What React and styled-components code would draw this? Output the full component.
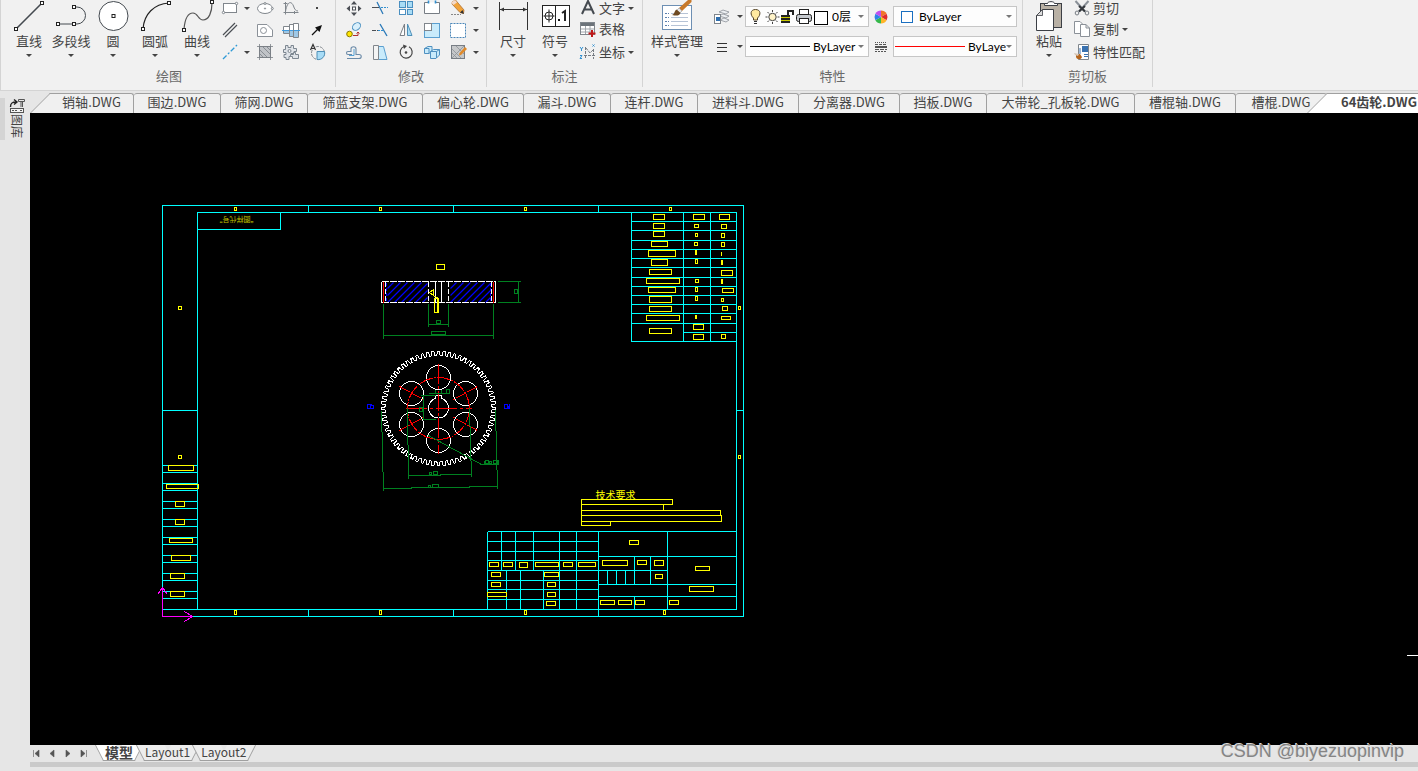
import React from 'react';
import styled, { createGlobalStyle, css } from 'styled-components';

const FONT = '"Noto Sans CJK SC", "Noto Sans", sans-serif';

const COLOR = {
  ribbon: '#f1f1f1',
  chrome: '#e6e6e6',
  line: '#d4d4d4',
  tabLine: '#a0a0a0',
  text: '#444444',
  muted: '#6a6a6a',
  cyan: '#00ffff',
  yellow: '#ffff00',
  green: '#008020',
  magenta: '#ff00ff',
};

/* ---------- drawing data: [x, y, w, h] and [x1, y1, x2, y2] ---------- */

const FRAME_LINES = [
  [162, 609, 197, 609],
  [308, 205, 308, 212], [453, 205, 453, 212], [598, 205, 598, 212],
  [308, 609, 308, 616], [453, 609, 453, 616], [598, 609, 598, 616],
  [162, 410, 197, 410], [736, 410, 743, 410],
  [197, 229, 280, 229], [280, 212, 280, 229],
];

const SIDE_ROWS = [465, 472, 483, 490, 501, 508, 519, 526, 537, 544, 555, 562, 573, 580, 591, 598];

const PARAM_ROWS = [221, 230, 240, 249, 258, 267, 277, 286, 295, 304, 313, 323, 341];

const PARAM_LINES = [
  [631, 212, 631, 341], [683, 212, 683, 341], [710, 212, 710, 341], [683, 332, 736, 332],
];

const TITLE_LINES = [
  [487, 531, 736, 531], [487, 531, 487, 609], [598, 531, 598, 609], [667, 531, 667, 609],
  [487, 541, 598, 541], [487, 551, 598, 551], [487, 560, 598, 560], [487, 570, 667, 570],
  [487, 580, 598, 580], [487, 589, 598, 589], [487, 599, 598, 599],
  [501, 531, 501, 570], [515, 531, 515, 570], [533, 531, 533, 570],
  [559, 531, 559, 609], [576, 531, 576, 609],
  [506, 570, 506, 609], [520, 570, 520, 609], [543, 570, 543, 609],
  [598, 556, 736, 556], [598, 584, 736, 584], [598, 596, 736, 596],
  [634, 556, 634, 584], [634, 596, 634, 609], [650, 556, 650, 584],
  [607, 570, 607, 584], [616, 570, 616, 584], [625, 570, 625, 584],
];

const BOXES = [
  // zone marks
  [234, 207, 2, 3], [379, 207, 2, 3], [524, 207, 2, 3], [669, 207, 2, 3],
  [234, 610, 2, 4], [379, 610, 2, 4], [524, 610, 2, 4], [663, 610, 2, 4],
  [178, 306, 3, 3], [178, 455, 3, 3], [738, 306, 2, 3], [738, 455, 2, 3],
  // left strip
  [168, 465, 25, 5], [166, 484, 32, 4], [175, 501, 9, 5], [175, 519, 9, 5],
  [169, 538, 23, 4], [171, 555, 19, 5], [170, 573, 14, 5], [170, 591, 14, 5],
  // parameter table
  [653, 214, 11, 5], [653, 223, 11, 5], [653, 231, 11, 5], [651, 241, 16, 5],
  [648, 250, 27, 6], [651, 259, 16, 6], [649, 269, 22, 5], [646, 278, 33, 5],
  [648, 287, 27, 5], [649, 296, 22, 6], [649, 306, 22, 5], [646, 315, 33, 5],
  [649, 328, 22, 5],
  [693, 214, 11, 5], [694, 224, 4, 3], [695, 233, 2, 3], [694, 242, 3, 3],
  [695, 250, 1, 4], [695, 259, 2, 4], [695, 279, 3, 3], [695, 287, 2, 4],
  [695, 296, 2, 4], [695, 315, 1, 3], [693, 324, 10, 5], [693, 334, 10, 5],
  [719, 214, 10, 5], [721, 224, 5, 4], [721, 233, 3, 4], [721, 242, 3, 4],
  [721, 260, 1, 4], [721, 270, 11, 5], [721, 279, 1, 4], [722, 288, 11, 4],
  [721, 298, 2, 3], [722, 306, 5, 4], [721, 316, 9, 3], [721, 334, 4, 4],
  // title block
  [489, 562, 9, 4], [503, 562, 9, 4], [519, 562, 8, 5], [535, 562, 23, 4],
  [563, 562, 9, 4], [578, 562, 17, 4], [491, 572, 9, 4], [544, 572, 14, 4],
  [491, 582, 9, 4], [547, 582, 8, 4], [487, 592, 19, 4], [547, 592, 8, 4],
  [546, 601, 9, 4], [629, 540, 9, 4], [602, 560, 25, 5], [637, 560, 9, 4],
  [654, 560, 9, 5], [655, 574, 7, 4], [695, 566, 14, 4], [689, 586, 24, 5],
  [600, 600, 14, 4], [618, 600, 13, 4], [635, 600, 9, 4], [669, 600, 9, 4],
  // notes
  [581, 499, 91, 5], [581, 504, 82, 6], [581, 510, 139, 5], [581, 515, 140, 6],
  [581, 521, 29, 4],
  // section mark
  [436, 264, 8, 5],
];

const linesToPath = (lines) => lines.map(([a, b, c, d]) => `M${a} ${b}L${c} ${d}`).join('');
const boxesToPath = (boxes) => boxes.map(([x, y, w, h]) => `M${x} ${y}h${w}v${h}h${-w}z`).join('');

function gearPath(cx, cy, teeth, root, tip) {
  const pitch = (Math.PI * 2) / teeth;
  const points = [];
  for (let i = 0; i < teeth; i++) {
    [[-0.32, root], [-0.18, tip], [0.18, tip], [0.32, root]].forEach(([offset, r]) => {
      const a = (i + offset) * pitch - Math.PI / 2;
      points.push(`${(cx + r * Math.cos(a)).toFixed(2)} ${(cy + r * Math.sin(a)).toFixed(2)}`);
    });
  }
  return `M${points.join('L')}Z`;
}

function hatchPath(left, right, top, bottom) {
  let d = '';
  for (let x = left - 14; x < right; x += 7) {
    const x1 = Math.max(x, left);
    const y1 = bottom - (x1 - x);
    const x2 = Math.min(x + (bottom - top), right);
    const y2 = bottom - (x2 - x);
    d += `M${x1} ${y1}L${x2} ${y2}`;
  }
  return d;
}

const HOLES = [[438, 377], [465, 393], [465, 424], [438, 440], [411, 424], [411, 393]];

/* ---------- model space ---------- */

function SheetFrame() {
  return (
    <g stroke={COLOR.cyan} fill="none">
      <rect x="162" y="205" width="581" height="411" />
      <rect x="197" y="212" width="539" height="397" />
      <path d={linesToPath(FRAME_LINES)} />
      <path d={SIDE_ROWS.map((y) => `M162 ${y}H197`).join('')} />
      <path d={PARAM_ROWS.map((y) => `M631 ${y}H736`).join('')} />
      <path d={linesToPath(PARAM_LINES)} />
      <path d={linesToPath(TITLE_LINES)} />
    </g>
  );
}

function SectionView() {
  return (
    <g fill="none">
      <g stroke="#0000ff" strokeWidth="1.2" shapeRendering="geometricPrecision">
        <path d={hatchPath(387, 427, 282, 302)} />
        <path d={hatchPath(450, 490, 282, 302)} />
      </g>
      <path d="M386 282V302M490 282V302" stroke="#0000ff" strokeDasharray="3 2" />
      <path d="M381 281H495M381 302H495" stroke="#fff" strokeDasharray="7 1" />
      <path d="M381 281V302M495 281V302M435 281V302M441 281V302" stroke="#fff" />
      <path d="M385 281V302M491 281V302M428 281V302M448 281V302" stroke="#fff" strokeDasharray="5 2" />
      <path d="M383 281V302M493 281V302" stroke="#ff0000" />
      <g stroke={COLOR.green}>
        <path d="M383 303V338M493 303V338M383 335H493M431 331h14v3h-14z" />
        <path d="M428 303V326M448 303V326M428 324H448M436 320h4v3h-4z" />
        <path d="M497 281H520M497 302H520M518 281V302M514 289h3v4h-3z" />
      </g>
      <path d="M429 292L433 289V295ZM433 295L438 298M434 298h4v14h-4zM437 298v14" stroke={COLOR.yellow} />
    </g>
  );
}

function GearView() {
  return (
    <g fill="none">
      <g stroke="#fff">
        <path d={gearPath(438, 408, 64, 53, 57)} />
        {HOLES.map(([cx, cy]) => (
          <circle key={`${cx}-${cy}`} cx={cx} cy={cy} r="12" />
        ))}
        <path d="M435 398V395H441V398A10 10 0 1 1 435 398" />
      </g>
      <g stroke="#ff0000">
        <circle cx="438" cy="408" r="31" strokeDasharray="14 1 2 1" />
        <path d="M405 408H471" strokeDasharray="21 3 3 3" />
        <path d="M438 363V453" strokeDasharray="20 2 3 2" />
        <path d="M399 386L423 399M477 386L453 399M399 430L423 417M477 430L453 417" strokeDasharray="12 1" />
      </g>
      <g stroke={COLOR.green}>
        <path d="M428 393H449M446 389h3v4h-3zM435 389V393M441 389V393" />
        <path d="M420 395H435M423 395V419M422 419H435M419 407h3v4h-3z" />
        <path d="M407 408L408 479M469 408L471 477M408 475H440V474H471" />
        <path d="M429 472h2v2h-2zM433 471h4v3h-4z" />
        <path d="M381 411L383 491M495 410L497 489M383 488H411V487H469V486H497" />
        <path d="M428 485h2v2h-2zM432 484h6v3h-6z" />
        <path d="M428 435L481 464H498M484 460V464M485 460h3v3h-3zM489 461h2v2h-2zM493 460h4v3h-4zM498 459V464" />
      </g>
      <path d="M371 404H367V408H373M370 405h3v3h-3zM504 404h3v4h-3zM509 403V408M507 406H509M508 405V408" stroke="#0000ff" />
    </g>
  );
}

function Drawing() {
  return (
    <DrawingSvg role="img" aria-label="64齿轮">
      <g transform="translate(-29.5 -112.5)" shapeRendering="crispEdges">
        <SheetFrame />
        <path d={boxesToPath(BOXES)} stroke={COLOR.yellow} fill="none" />
        <path d="M721 251V255" stroke={COLOR.yellow} />
        <SectionView />
        <GearView />
        <g stroke={COLOR.magenta} fill="none">
          <path d="M162 587V616H192M157 594L162 587L167 594M184 611L192 616L184 621" />
        </g>
        <path d="M1406.5 655H4000" stroke="#fff" />
        <NoteText x="595" y="498" fontSize="10">技术要求</NoteText>
        <NoteText x="-257" y="-216" fontSize="7" transform="rotate(180)" opacity="0.75">
          “图样代号”
        </NoteText>
      </g>
    </DrawingSvg>
  );
}

/* ---------- icons ---------- */

const Node = ({ x, y }) => <rect x={x - 1.5} y={y - 1.5} width="3" height="3" fill="#fff" stroke="#222" />;

const BIG_ICONS = {
  line: (
    <g>
      <path d="M4 29L30 3" stroke="#444a50" strokeWidth="1.6" />
      <Node x={4} y={29} /><Node x={30} y={3} />
    </g>
  ),
  polyline: (
    <g fill="none">
      <path d="M20 7H23A8.5 8.5 0 0 1 23 24H4" stroke="#444a50" />
      <Node x={20} y={7} /><Node x={20} y={24} /><Node x={4} y={24} />
    </g>
  ),
  circle: (
    <g>
      <circle cx="17.5" cy="16" r="14.5" fill="#fff" stroke="#444a50" />
      <Node x={17.5} y={16} />
    </g>
  ),
  arc: (
    <g fill="none">
      <path d="M5 29C6 14 16 4 31 3" stroke="#222" strokeWidth="1.2" />
      <Node x={5} y={29} /><Node x={31} y={3} />
    </g>
  ),
  spline: (
    <g fill="none">
      <path d="M4 29C5 18 8 13 13 13C18 13 18 20 23 20C29 20 32 12 32 3" stroke="#555" strokeWidth="1.2" />
      <Node x={4} y={30} /><Node x={32} y={2} />
    </g>
  ),
  dimension: (
    <g stroke="#333" fill="none">
      <path d="M3.5 2V30M31.5 2V30M4 9.5H31" />
      <path d="M4 9.5l4-2v4zM31 9.5l-4-2v4z" fill="#333" stroke="none" />
    </g>
  ),
  symbol: (
    <g fill="none" stroke="#222">
      <rect x="4.5" y="5.5" width="27" height="21" fill="#fff" />
      <path d="M17.5 5.5V26.5M5.5 16H16.5M11 9.5V22.5" />
      <circle cx="11" cy="16" r="4" />
      <rect x="20" y="19" width="2" height="2" fill="#111" stroke="none" />
      <path d="M24 13L27 11V21" strokeWidth="2" />
    </g>
  ),
  style: (
    <g>
      <rect x="2.5" y="5.5" width="29" height="24" fill="#fff" stroke="#6d8fb3" />
      <path d="M5 13.5h4M5 17.5h4M5 21.5h4M5 25.5h4" stroke="#5b7fae" strokeDasharray="2 1" />
      <path d="M11 13.500h3M20 13.500h8M11 17.500h17M11 21.500h17M11 25.500h17" stroke="#b6c3d6" />
      <path d="M28 0H31.500V2L22 11L19 8Z" fill="#c8792a" />
      <path d="M22 11L19 8L17 10L20 13Z" fill="#e8e8e8" stroke="#888" strokeWidth=".5" />
      <path d="M20.500 13L16.500 9.500C14 11 15 14 12 15C17 16 19 16 20.500 13Z" fill="#6e4a22" />
    </g>
  ),
  paste: (
    <g>
      <rect x="8.5" y="3.5" width="21" height="24" fill="#b9b1a5" stroke="#3c3f45" />
      <path d="M12.500 5.500V3.500H15.500C15.500 1 22.500 1 22.500 3.500H25.500V5.500Z" fill="#fff" stroke="#3c3f45" />
      <path d="M10.500 9.500H21.500V30.500H4.500V15.500Z" fill="#fff" stroke="#3c3f45" />
      <path d="M10.500 9.500V15.500H4.500Z" fill="#dcdcdc" stroke="#3c3f45" strokeWidth=".8" />
    </g>
  ),
};

const ICONS = {
  rect: (
    <g fill="#fff" stroke="#80868c">
      <rect x="3.5" y="5.5" width="13" height="9" />
      <circle cx="3.5" cy="14.5" r="1.2" /><circle cx="16.5" cy="5.5" r="1.2" />
    </g>
  ),
  ellipse: (
    <g fill="#fff" stroke="#80868c">
      <ellipse cx="10" cy="10.500" rx="7.5" ry="5" />
      <circle cx="10" cy="5.500" r="1" /><circle cx="10" cy="10.500" r=".6" /><circle cx="17.3" cy="10.500" r="1" />
    </g>
  ),
  func: (
    <g fill="none" stroke="#80868c">
      <path d="M4.500 4V16.500M2.500 14.500H17.500M2.500 5.500h4M13.500 13v3" />
      <path d="M4.500 13.500C6 4 10 2 12.500 8C13.500 11 14.500 13 17 13" />
    </g>
  ),
  point: <rect x="9" y="9" width="2" height="2" fill="#444" />,
  doubleLine: <path d="M3 15L15 3M5 17L17 5" stroke="#4b4f55" strokeWidth="1.2" />,
  plate: (
    <g fill="#fff" stroke="#8b9198">
      <path d="M2.5 4.5H12L17.5 10V16.5H2.5Z" /><circle cx="8.5" cy="10.5" r="3" />
    </g>
  ),
  shaft: (
    <g>
      <path d="M2.500 6.500H8.500V4.500H12.500V3.500H17.500V17.500H12.500V16.500H8.500V13.500H2.500Z" fill="#fff" stroke="#80868c" />
      <path d="M3 11H17V17H13V16H9V13H3Z" fill="#9fc8e6" />
      <path d="M1 10.500H19" stroke="#3f9be0" />
      <path d="M8.500 4.500V16.500M12.500 3.500V17.500" stroke="#80868c" />
    </g>
  ),
  arrow: (
    <g>
      <path d="M5 15L11 9" stroke="#111" strokeWidth="1.2" />
      <path d="M15 5L12.5 12L8 7.5Z" fill="#111" />
    </g>
  ),
  xline: <path d="M3 17L17 3" stroke="#2f9ad6" strokeWidth="1.3" strokeDasharray="5 2 2 2" />,
  hatch: (
    <g stroke="#7b8086">
      <rect x="4.5" y="4.5" width="11" height="11" fill="#c0c3c7" />
      <path d="M2 4.5H18M2 15.5H18M4.5 2V18M15.5 2V18M5 8L12 15M8 5L15 12M5 12l3 3M12 5l3 3" strokeWidth=".8" />
    </g>
  ),
  gears: (
    <g fill="#dfe3e8" stroke="#7d8791">
      <path d="M4.500 3.500h2.500v2h3v-2h2.500v3h3v3h-2.500v2h-3v3h-2v3h-3v-2h-2v-3h2v-2h-2.500v-3h2z" />
      <path d="M12.500 10.500h2v2h3v4h-6v-2h-2v-2h3z" />
      <circle cx="8.500" cy="9" r="1.500" fill="#f1f1f1" />
    </g>
  ),
  region: (
    <g fill="none">
      <circle cx="11" cy="11" r="6.5" stroke="#80868c" strokeDasharray="3 1" />
      <path d="M10 9.500H17.500A6.500 6.500 0 0 1 10 17.500Z" fill="#a8dcf6" stroke="#4f90b8" />
      <path d="M3.500 8L6 2.500L8.500 8M4.500 6.500H7.500" stroke="#333" strokeWidth="1.200" />
    </g>
  ),
  move: (
    <g fill="#4b4f55">
      <path d="M10 3l3 3.500h-6zM10 18l3-3.500h-6zM2.500 10.500l3.500-3v6zM17.500 10.500l-3.500-3v6z" />
      <rect x="8.5" y="9" width="3" height="3" fill="#fff" stroke="#4b4f55" />
    </g>
  ),
  trim: (
    <g fill="none">
      <path d="M2 9.5H9" stroke="#4b4f55" /><path d="M11 9.5H18" stroke="#2f8fd0" strokeDasharray="2 1" />
      <path d="M7 4L13 16" stroke="#2878b8" strokeWidth="1.3" />
    </g>
  ),
  array: (
    <g fill="#a9dcf5" stroke="#4a8fc0">
      <rect x="3.5" y="3.5" width="6" height="6" /><rect x="11.5" y="3.5" width="5" height="6" />
      <rect x="3.5" y="11.5" width="6" height="5" fill="#fff" /><rect x="11.5" y="11.5" width="5" height="5" />
    </g>
  ),
  breakLine: (
    <g fill="#fff" stroke="#777d84">
      <path d="M6 4.500H2.500V15.500H17.500V4.500H14" />
      <path d="M6.500 2.500v3M13.500 2.500v3" stroke="#2f8fd0" strokeWidth="1.600" />
    </g>
  ),
  pencil: (
    <g>
      <path d="M4 4L7.500 2L16 12L15.500 15.500L12 14.500L4 6Z" fill="#f1a33a" stroke="#a8672a" strokeWidth=".7" />
      <path d="M3 4.500L7 2L9 4.500L5.500 7Z" fill="#f4d9c8" /><path d="M16 16L12 14.500L14.500 12Z" fill="#333" />
      <path d="M3 16.500H13" stroke="#888" strokeDasharray="2 1" />
    </g>
  ),
  copyObject: (
    <g>
      <circle cx="5.5" cy="14" r="2.8" fill="#ffe500" stroke="#8a7a00" />
      <ellipse cx="12.5" cy="6.5" rx="4.5" ry="3.3" transform="rotate(-40 12.5 6.5)" fill="#d8effb" stroke="#4a90c0" />
      <path d="M9 15.5H14V12M12.500 13.500L14 12l1.500 1.500" fill="none" stroke="#b03030" />
    </g>
  ),
  extend: (
    <g fill="none">
      <path d="M2 10.5H8" stroke="#4b4f55" strokeDasharray="4 1" />
      <path d="M8 10.5H14" stroke="#2f8fd0" strokeDasharray="2 1" />
      <path d="M10 4L17 16" stroke="#2878b8" strokeWidth="1.3" />
    </g>
  ),
  mirror: (
    <g stroke="#7b8086">
      <path d="M8.5 4V15.5H4Z" fill="#fff" /><path d="M11.5 4V15.5H16Z" fill="#a8dcf6" stroke="#4f90b8" />
    </g>
  ),
  scale: (
    <g>
      <rect x="2.5" y="3.5" width="15" height="14" fill="#c9ebfb" stroke="#5a9fd0" />
      <rect x="2.5" y="3.5" width="7" height="7" fill="#fff" stroke="#80868c" />
    </g>
  ),
  select: <rect x="2.5" y="3.5" width="15" height="14" fill="#fff" stroke="#4a86b8" strokeDasharray="2 1" />,
  offset: (
    <g fill="none" strokeWidth="1.1">
      <path d="M3 16.500H15C18 16.500 18 12.500 15 12.500H12V7C12 4 7 4 7 7V9.500H4C2 9.500 2 12.500 4 12.500H8" stroke="#6c8ba8" />
      <path d="M10 7V13.500H5" stroke="#2f8fd0" strokeWidth=".8" />
    </g>
  ),
  stretch: (
    <g>
      <path d="M8.500 4.500H13.500L17 17.500H8.500Z" fill="#c9ebfb" stroke="#5a9fd0" />
      <path d="M3.500 3.500H8.500V17.500H3.500Z" fill="#f4f4f4" stroke="#80868c" />
    </g>
  ),
  rotate: (
    <g fill="none">
      <path d="M13 4.8A6 6 0 1 1 8 4.5" stroke="#444" strokeWidth="1.2" />
      <path d="M7 2.5L11 4L8 7Z" fill="#444" /><circle cx="10" cy="10.5" r="1.3" fill="#444" />
    </g>
  ),
  blocks: (
    <g fill="#c9ebfb" stroke="#4f90c0">
      <path d="M2.5 6.5L6 4.5H10V9L7 11.5H2.5Z" /><path d="M8.5 9.5L11.5 7.5H17.5V13L14 16.5H8.5Z" />
      <path d="M8.5 9.5H14.5V16M14.5 9.5L17.5 7.5M2.5 6.5H7V11" fill="none" />
    </g>
  ),
  editHatch: (
    <g>
      <rect x="3.5" y="3.5" width="13" height="13" fill="#c6c8ca" stroke="#777d84" />
      <path d="M4 7L13 16M4 11L9 16M8 4L16 12M4 16L16 4" stroke="#8d9297" strokeWidth=".8" />
      <path d="M17 5L19 7L13 13L11 13.5L11.5 11Z" fill="#e08a2a" />
    </g>
  ),
  letter: <path d="M4 16L10 3L16 16M6.5 11.5H13.5" fill="none" stroke="#454a50" strokeWidth="2" />,
  table: (
    <g>
      <rect x="2.5" y="3.5" width="14" height="12" fill="#fff" stroke="#80868c" />
      <rect x="3" y="4" width="13" height="3" fill="#6c737a" />
      <path d="M3 10h13M3 13h13M7.500 7V15M12 7V15" stroke="#a0a5ab" />
      <path d="M14 11V18M10.500 14.500H17.500" stroke="#c01818" strokeWidth="2" />
    </g>
  ),
  coords: (
    <g fill="none" stroke="#777d84">
      <path d="M7.500 5V17M6 13.500H17M8 6L12 11L16 7M15.500 7V17" strokeDasharray="3 1" />
      <path d="M2 5l1.500 2l1.500-2M3.500 7v2M2 13.500h2l-2 3h2M14.500 2.500l2 2M16.500 2.500l-2 2" stroke="#2f8fd0" />
    </g>
  ),
  layers: (
    <g>
      <path d="M7 5L11 3L17 5L14 7ZM7 9L11 7L17 9L14 11ZM8 13L12 11L17 13L14 15Z" fill="#eceff2" stroke="#8b9198" strokeWidth=".8" />
      <rect x="2.5" y="7.5" width="6" height="9" fill="#fff" stroke="#80868c" />
      <rect x="4" y="10" width="4" height="4" fill="#2f6fae" />
    </g>
  ),
  weight: <path d="M5 6.500H15M5 10.500H15M5 14.500H15" stroke="#333" />,
  wheel: (
    <g>
      <path d="M10 10V3.500A6.500 6.500 0 0 1 15.600 6.800Z" fill="#f0742a" />
      <path d="M10 10L15.600 6.800A6.500 6.500 0 0 1 15.600 13.200Z" fill="#e02c2c" />
      <path d="M10 10L15.600 13.200A6.500 6.500 0 0 1 10 16.500Z" fill="#ffb428" />
      <path d="M10 10V16.500A6.500 6.500 0 0 1 4.400 13.200Z" fill="#35b84a" />
      <path d="M10 10L4.400 13.200A6.500 6.500 0 0 1 4.400 6.800Z" fill="#2d84e8" />
      <path d="M10 10L4.400 6.800A6.500 6.500 0 0 1 10 3.500Z" fill="#c050f0" />
    </g>
  ),
  linetype: (
    <g stroke="#555">
      <path d="M4 5.500H16" strokeDasharray="1 1" /><path d="M4 7.500H16" strokeDasharray="3 1" />
      <path d="M4 10H16" strokeWidth="2" /><path d="M4 12.500H16" strokeDasharray="4 1" />
      <path d="M4 14.500H16" strokeDasharray="2 1" />
    </g>
  ),
  cut: (
    <g fill="none">
      <path d="M3.500 3L13 13.500M16.500 3L7 13.500" stroke="#8b9198" strokeWidth="2" />
      <path d="M7 8L13 13.500M13 8L7 13.500" stroke="#33373c" strokeWidth="2" />
      <ellipse cx="5" cy="15" rx="1.800" ry="2" stroke="#777d84" /><ellipse cx="15" cy="15" rx="1.800" ry="2" stroke="#777d84" />
    </g>
  ),
  copy: (
    <g fill="#fff" stroke="#8b9198">
      <path d="M2.5 2.5H8L10.500 5V14.500H2.500Z" />
      <path d="M8.500 5.500H14L17.500 9V17.500H8.500ZM14 5.500V9H17.500" />
    </g>
  ),
  match: (
    <g>
      <path d="M6.500 2.500H16.500V17.500H6.500Z" fill="#fff" stroke="#80868c" />
      <rect x="10" y="4" width="6" height="6" fill="#3a72b0" />
      <path d="M8 6v6M12 12.500h4M12 14.500h4" stroke="#3a72b0" />
      <path d="M4 12L8 12L10 15C9 18 5 18 4 15Z" fill="#b5651d" /><path d="M2 11L7 12L6 14L3 13Z" fill="#d8c8b8" />
    </g>
  ),
};

const BigIcon = ({ name }) => <svg width="34" height="32" aria-hidden="true">{BIG_ICONS[name]}</svg>;
const Icon = ({ name }) => <svg width="20" height="20" aria-hidden="true">{ICONS[name]}</svg>;

function LayerIcons() {
  return (
    <svg width="82" height="19" viewBox="1 0 82 19" aria-hidden="true">
      <path d="M9.500 2.500C4 2.500 4 8 7.500 11V13H11.500V11C15 8 15 2.500 9.500 2.500Z" fill="#ffe9a0" stroke="#55452a" />
      <path d="M8 14.500H11M8 16.500H11" stroke="#333" />
      <circle cx="26.500" cy="10" r="3.700" fill="#fff3c8" stroke="#444" />
      <path d="M26.500 3V5M26.500 15V17M19.500 10h2M31.500 10h2M21.500 5l1.500 1.500M31.500 5L30 6.500M21.500 15l1.500-1.500M31.500 15L30 13.500" stroke="#444" />
      <path d="M42 9V4H47V8" fill="none" stroke="#222" strokeWidth="2" />
      <rect x="35" y="8" width="9" height="8" fill="#222" /><path d="M35 10.500h9M35 13.500h9" stroke="#c9c900" />
      <rect x="53.500" y="2.500" width="9" height="5" fill="#fff" stroke="#222" />
      <rect x="50.500" y="7.500" width="15" height="7" rx="2" fill="#c5c9ce" stroke="#222" />
      <rect x="53.500" y="11.500" width="9" height="5" fill="#fff" stroke="#222" />
      <rect x="68.500" y="4.500" width="13" height="13" fill="#fff" stroke="#000" />
    </svg>
  );
}

/* ---------- ribbon ---------- */

const DRAW_BIG = [['line', '直线'], ['polyline', '多段线'], ['circle', '圆'], ['arc', '圆弧'], ['spline', '曲线']];

const DRAW_SMALL = [
  ['rect', '矩形', true], ['ellipse', '椭圆'], ['func', '公式曲线'], ['point', '点'],
  ['doubleLine', '平行线'], ['plate', '轮廓'], ['shaft', '轴'], ['arrow', '箭头'],
  ['xline', '构造线', true], ['hatch', '剖面线'], ['gears', '齿轮'], ['region', '局部放大'],
];

const MODIFY_SMALL = [
  ['move', '移动'], ['trim', '裁剪'], ['array', '阵列'], ['breakLine', '打断'], ['pencil', '删除', true],
  ['copyObject', '平移复制'], ['extend', '延伸'], ['mirror', '镜像'], ['scale', '缩放'], ['select', '选择', true],
  ['offset', '等距线'], ['stretch', '拉伸'], ['rotate', '旋转'], ['blocks', '块'], ['editHatch', '编辑填充', true],
];

function Big({ icon, label, wide }) {
  return (
    <BigButton type="button" $wide={wide}>
      <BigIcon name={icon} />
      <BigLabel>{label}</BigLabel>
      <Caret />
    </BigButton>
  );
}

function Tool({ icon, label, menu }) {
  return (
    <>
      <ToolButton type="button" aria-label={label}>
        <Icon name={icon} />
      </ToolButton>
      {menu && (
        <ToolButton type="button" aria-label={`${label}选项`}>
          <Caret />
        </ToolButton>
      )}
    </>
  );
}

function ListItem({ icon, label, menu }) {
  return (
    <ListButton type="button">
      <Icon name={icon} />
      <ListLabel>{label}</ListLabel>
      {menu && <CaretBox><Caret /></CaretBox>}
    </ListButton>
  );
}

function Combo({ label, value, children }) {
  return (
    <ComboBox>
      {children}
      <ComboSelect aria-label={label} defaultValue={value}>
        <option value={value}>{value}</option>
      </ComboSelect>
      <Caret $soft />
    </ComboBox>
  );
}

function Ribbon() {
  return (
    <RibbonBar>
      <Group>
        <GroupBody>
          {DRAW_BIG.map(([icon, label]) => <Big key={icon} icon={icon} label={label} />)}
          <DrawGrid>
            {DRAW_SMALL.map(([icon, label, menu], i) => (
              <React.Fragment key={icon}>
                <Tool icon={icon} label={label} menu={menu} />
                {i === 4 && <span />}
              </React.Fragment>
            ))}
          </DrawGrid>
        </GroupBody>
        <GroupTitle>绘图</GroupTitle>
      </Group>
      <Group>
        <GroupBody>
          <ModifyGrid>
            {MODIFY_SMALL.map(([icon, label, menu]) => <Tool key={icon} icon={icon} label={label} menu={menu} />)}
          </ModifyGrid>
        </GroupBody>
        <GroupTitle>修改</GroupTitle>
      </Group>
      <Group>
        <GroupBody>
          <Big icon="dimension" label="尺寸" />
          <Big icon="symbol" label="符号" />
          <List>
            <ListItem icon="letter" label="文字" menu />
            <ListItem icon="table" label="表格" />
            <ListItem icon="coords" label="坐标" menu />
          </List>
        </GroupBody>
        <GroupTitle>标注</GroupTitle>
      </Group>
      <Group>
        <GroupBody>
          <Big icon="style" label="样式管理" wide />
          <PropertyGrid>
            <Tool icon="layers" label="图层" menu />
            <Combo label="当前图层" value="0层"><LayerIcons /></Combo>
            <Tool icon="wheel" label="颜色管理" />
            <Combo label="颜色" value="ByLayer"><Swatch /></Combo>
            <Tool icon="weight" label="线宽管理" menu />
            <Combo label="线型" value="ByLayer"><LineSample $inset={3} $width={60} $color="#000" /></Combo>
            <Tool icon="linetype" label="线型管理" />
            <Combo label="线宽" value="ByLayer"><LineSample $inset={0} $width={70} $color="#ff0000" /></Combo>
          </PropertyGrid>
        </GroupBody>
        <GroupTitle>特性</GroupTitle>
      </Group>
      <Group>
        <GroupBody>
          <Big icon="paste" label="粘贴" />
          <List>
            <ListItem icon="cut" label="剪切" />
            <ListItem icon="copy" label="复制" menu />
            <ListItem icon="match" label="特性匹配" />
          </List>
        </GroupBody>
        <GroupTitle>剪切板</GroupTitle>
      </Group>
    </RibbonBar>
  );
}

/* ---------- document window ---------- */

const DOCS = [
  ['销轴', 84], ['围边', 87], ['筛网', 87], ['筛蓝支架', 115], ['偏心轮', 101], ['漏斗', 87], ['连杆', 87],
  ['进料斗', 101], ['分离器', 101], ['挡板', 87], ['大带轮_孔板轮', 148], ['槽棍轴', 101], ['槽棍', 91],
];

const NAV = [
  ['首页', 'M2.5 1V8M8 1V8L4 4.5Z'],
  ['上一页', 'M7 1V8L3 4.5Z'],
  ['下一页', 'M3 1V8L7 4.5Z'],
  ['末页', 'M7.5 1V8M2 1V8L6 4.5Z'],
];

export default function App() {
  return (
    <Page>
      <GlobalStyle />
      <Ribbon />
      <Workspace>
        <Sidebar>
          <SidebarGrip />
          <LibraryTab type="button">
            <svg width="16" height="16" aria-hidden="true">
              <path d="M1.5 9C1.5 5 3 4 7 4M5 1.5L8 4L5 6.5" fill="none" stroke="#222" strokeWidth="1.4" />
              <path d="M9.5 1.5H15.5V3.5H9.5ZM12 4V9M13.5 4V9" fill="none" stroke="#555" />
              <rect x="1.5" y="10.5" width="13" height="4" fill="#f4f4f4" stroke="#555" />
              <path d="M3 12.5H9M11 12.5H13" stroke="#555" strokeDasharray="2 1" />
            </svg>
            <LibraryLabel>图库</LibraryLabel>
          </LibraryTab>
        </Sidebar>
        <DocumentPane>
          <DocTabs>
            {DOCS.map(([name, width], i) => (
              <DocTab key={name} type="button" $width={width} $first={i === 0}>
                <span>{name}.DWG</span>
              </DocTab>
            ))}
            <ActiveDocTab type="button"><span>64齿轮.DWG</span></ActiveDocTab>
          </DocTabs>
          <Canvas>
            <Drawing />
          </Canvas>
          <SheetBar>
            {NAV.map(([label, d]) => (
              <NavButton key={label} type="button" aria-label={label}>
                <svg width="10" height="9" aria-hidden="true"><path d={d} fill="#555" stroke="#555" strokeWidth=".6" /></svg>
              </NavButton>
            ))}
            <SheetTab type="button" $active><span>模型</span></SheetTab>
            <SheetTab type="button"><span>Layout1</span></SheetTab>
            <SheetTab type="button"><span>Layout2</span></SheetTab>
          </SheetBar>
          <BottomRule />
        </DocumentPane>
      </Workspace>
      <Watermark>CSDN @biyezuopinvip</Watermark>
    </Page>
  );
}

/* ---------- styles ---------- */

const GlobalStyle = createGlobalStyle`
  * {
    box-sizing: border-box;
  }
  body {
    margin: 0;
    background: ${COLOR.chrome};
    font-family: ${FONT};
    font-size: 13px;
    color: ${COLOR.text};
  }
  button {
    margin: 0;
    padding: 0;
    border: 0;
    background: none;
    font: inherit;
    color: inherit;
  }
  svg {
    display: block;
    flex-shrink: 0;
  }
`;

const Page = styled.div`
  position: relative;
  display: flex;
  flex-direction: column;
  height: 100vh;
  overflow: hidden;
`;

const RibbonBar = styled.header`
  display: flex;
  flex-shrink: 0;
  padding: 0 0 3px 2px;
  border-left: 1px solid ${COLOR.line};
  border-bottom: 1px solid ${COLOR.line};
  background: ${COLOR.ribbon};
`;

const Group = styled.section`
  display: flex;
  flex-direction: column;
  flex-shrink: 0;
  padding: 0 5px;
  border-right: 1px solid ${COLOR.line};
`;

const GroupBody = styled.div`
  display: flex;
  height: 66px;
`;

const GroupTitle = styled.div`
  height: 21px;
  line-height: 20px;
  text-align: center;
  color: ${COLOR.muted};
`;

const BigButton = styled.button`
  display: flex;
  flex-direction: column;
  align-items: center;
  width: ${p => (p.$wide ? 58 : 42)}px;
  white-space: nowrap;
`;

const BigLabel = styled.span`
  height: 22px;
  line-height: 18px;
`;

const Caret = styled.i`
  width: 0;
  height: 0;
  flex-shrink: 0;
  border: 3px solid transparent;
  border-top-color: ${p => (p.$soft ? '#777777' : '#444444')};
  border-bottom-width: 0;
`;

const iconGrid = css`
  display: grid;
  grid-auto-rows: 22px;
  margin-top: -3px;
`;

const DrawGrid = styled.div`
  ${iconGrid}
  grid-template-columns: 24px 10px 26px 26px 26px;
`;

const ModifyGrid = styled.div`
  ${iconGrid}
  grid-template-columns: repeat(5, 26px) 10px;
`;

const ToolButton = styled.button`
  display: flex;
  align-items: center;
  justify-content: center;
`;

const List = styled.div`
  display: grid;
  grid-template-rows: 16px 20px 20px;
  align-content: start;
  row-gap: 3px;
  padding: 0 1px 0 2px;
`;

const ListButton = styled.button`
  display: flex;
  align-items: center;
  white-space: nowrap;
`;

const ListLabel = styled.span`
  padding: 0 1px;
  line-height: 16px;
`;

const CaretBox = styled.span`
  display: flex;
  justify-content: center;
  width: 10px;
`;

const PropertyGrid = styled.div`
  display: grid;
  grid-template-columns: 24px 11px 124px 24px 124px;
  grid-auto-rows: 21px;
  row-gap: 9px;
  padding: 6px 0 0 4px;
`;

const ComboBox = styled.div`
  display: flex;
  align-items: center;
  padding: 0 4px 0 1px;
  border: 1px solid #c6c6c6;
  background: #fdfdfd;
`;

const ComboSelect = styled.select`
  flex: 1;
  min-width: 0;
  height: 19px;
  padding: 0 0 0 3px;
  border: 0;
  appearance: none;
  background: none;
  font-family: Lato, ${FONT};
  font-size: 12px;
  line-height: 19px;
  color: #000000;
`;

const Swatch = styled.span`
  width: 12px;
  height: 12px;
  margin: 0 3px 0 6px;
  flex-shrink: 0;
  border: 1px solid #1a6fc0;
  background: #ffffff;
`;

const LineSample = styled.span`
  width: ${p => p.$width}px;
  height: 1px;
  margin-left: ${p => p.$inset}px;
  flex-shrink: 0;
  background: ${p => p.$color};
`;

const Workspace = styled.main`
  display: flex;
  flex: 1;
  min-height: 0;
`;

const Sidebar = styled.aside`
  display: flex;
  align-items: flex-start;
  gap: 4px;
  width: 30px;
  flex-shrink: 0;
  padding-top: 7px;
`;

const SidebarGrip = styled.div`
  width: 5px;
  height: 42px;
  background: ${COLOR.line};
`;

const LibraryTab = styled.button`
  display: flex;
  flex-direction: column;
  align-items: center;
  width: 16px;
`;

const LibraryLabel = styled.span`
  writing-mode: vertical-rl;
  text-orientation: sideways;
  font-size: 12px;
  line-height: 16px;
`;

const DocumentPane = styled.div`
  display: flex;
  flex-direction: column;
  flex: 1;
  min-width: 0;
`;

const DocTabs = styled.nav`
  display: flex;
  flex-shrink: 0;
  height: 22px;
  padding: 2px 0 0 20px;
  overflow: hidden;
`;

const slantedEdge = css`
  &::before {
    content: '';
    position: absolute;
    inset: -1px auto 0 -10px;
    width: 30px;
    border-top: 1px solid ${COLOR.tabLine};
    border-left: 1px solid ${COLOR.tabLine};
    background: inherit;
    transform: skewX(-45deg);
  }
`;

const DocTab = styled.button`
  position: relative;
  width: ${p => p.$width}px;
  flex-shrink: 0;
  padding-bottom: 3px;
  border-top: 1px solid ${COLOR.tabLine};
  border-right: 1px solid ${COLOR.tabLine};
  border-radius: ${p => (p.$first ? '0 3px 0 0' : '3px 3px 0 0')};
  background: #f0f0f0;
  line-height: 16px;
  white-space: nowrap;

  span {
    position: relative;
  }

  ${p => p.$first && slantedEdge}
`;

const ActiveDocTab = styled.button`
  position: relative;
  flex: 1 0 92px;
  padding-bottom: 3px;
  border-top: 1px solid ${COLOR.tabLine};
  background: #ffffff;
  font-weight: 700;
  line-height: 16px;
  text-align: left;
  white-space: nowrap;

  span {
    position: relative;
    padding-left: 14px;
  }

  ${slantedEdge}
`;

const Canvas = styled.div`
  flex: 1;
  min-height: 0;
  overflow: hidden;
  background: #000000;
`;

const DrawingSvg = styled.svg`
  width: 100%;
  height: 100%;
`;

const NoteText = styled.text`
  font-family: ${FONT};
  fill: ${COLOR.yellow};
`;

const SheetBar = styled.nav`
  display: flex;
  flex-shrink: 0;
  height: 17px;
  padding-bottom: 1px;
`;

const NavButton = styled.button`
  display: flex;
  align-items: center;
  padding-left: 1px;
  width: 16px;
`;

const SheetTab = styled.button`
  position: relative;
  margin-left: ${p => (p.$active ? 5 : 1)}px;
  padding: 0 5px 2px;
  min-width: ${p => (p.$active ? 40 : 54)}px;
  font-size: ${p => (p.$active ? 14 : 12)}px;
  font-weight: ${p => (p.$active ? 700 : 400)};
  line-height: 14px;

  &::before,
  &::after {
    content: '';
    position: absolute;
    top: 0;
    bottom: 0;
    width: 50%;
    border-bottom: 1px solid ${COLOR.tabLine};
    background: ${p => (p.$active ? '#ffffff' : '#ededed')};
  }
  &::before {
    left: 0;
    border-left: 1px solid ${COLOR.tabLine};
    transform: skewX(27deg);
  }
  &::after {
    right: 0;
    border-right: 1px solid ${COLOR.tabLine};
    transform: skewX(-27deg);
  }
  span {
    position: relative;
    z-index: 1;
  }
`;

const BottomRule = styled.div`
  flex-shrink: 0;
  height: 9px;
  border-bottom: 4px solid ${COLOR.chrome};
  background: #cacaca;
`;

const Watermark = styled.div`
  position: absolute;
  right: 14px;
  bottom: 8px;
  font-family: 'Liberation Sans', sans-serif;
  font-size: 18px;
  line-height: 24px;
  color: #858585;
  text-shadow: -1px -1px 0 #d8d8d8;
`;
